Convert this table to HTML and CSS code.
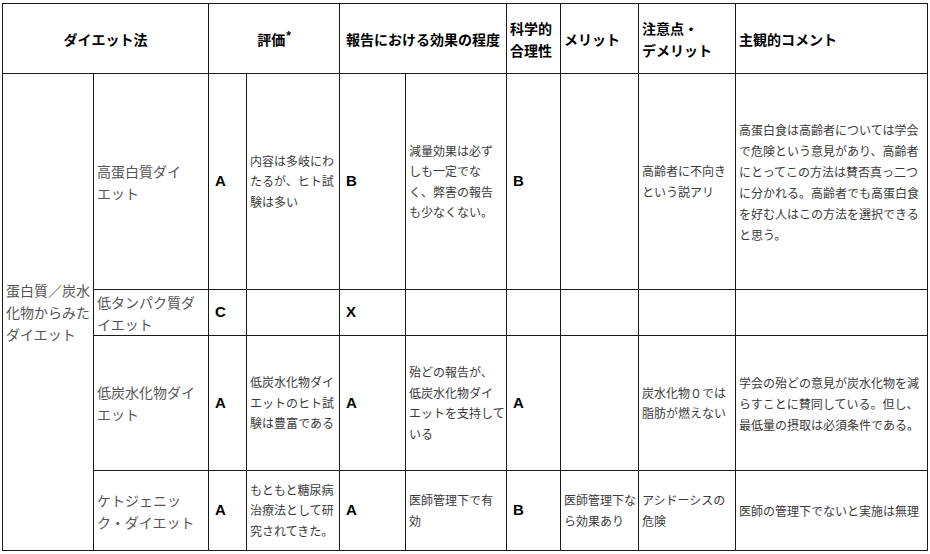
FILE: index.html
```html
<!DOCTYPE html>
<html lang="ja">
<head>
<meta charset="utf-8">
<title>ダイエット法</title>
<link rel="stylesheet" href="styles.css">
</head>
<body>
<table class="diet">
  <colgroup>
    <col class="c1"><col class="c2"><col class="c3"><col class="c4"><col class="c5">
    <col class="c6"><col class="c7"><col class="c8"><col class="c9"><col class="c10">
  </colgroup>
  <thead>
    <tr class="r-head">
      <th colspan="2" class="center">ダイエット法</th>
      <th colspan="2" class="center">評価<sup>*</sup></th>
      <th colspan="2" class="center">報告における効果の程度</th>
      <th>科学的<br>合理性</th>
      <th>メリット</th>
      <th>注意点・<br>デメリット</th>
      <th>主観的コメント</th>
    </tr>
  </thead>
  <tbody>
    <tr class="r1">
      <td rowspan="4" class="big">蛋白質／炭水<br>化物からみた<br>ダイエット</td>
      <td class="big">高蛋白質ダイ<br>エット</td>
      <td class="grade">A</td>
      <td>内容は多岐にわ<br>たるが、ヒト試<br>験は多い</td>
      <td class="grade">B</td>
      <td>減量効果は必ず<br>しも一定でな<br>く、弊害の報告<br>も少なくない。</td>
      <td class="grade">B</td>
      <td></td>
      <td>高齢者に不向き<br>という説アリ</td>
      <td class="comment">高蛋白食は高齢者については学会<br>で危険という意見があり、高齢者<br>にとってこの方法は賛否真っ二つ<br>に分かれる。高齢者でも高蛋白食<br>を好む人はこの方法を選択できる<br>と思う。</td>
    </tr>
    <tr class="r2">
      <td class="big">低タンパク質ダ<br>イエット</td>
      <td class="grade">C</td>
      <td></td>
      <td class="grade">X</td>
      <td></td>
      <td></td>
      <td></td>
      <td></td>
      <td></td>
    </tr>
    <tr class="r3">
      <td class="big">低炭水化物ダイ<br>エット</td>
      <td class="grade">A</td>
      <td>低炭水化物ダイ<br>エットのヒト試<br>験は豊富である</td>
      <td class="grade">A</td>
      <td>殆どの報告が、<br>低炭水化物ダイ<br>エットを支持して<br>いる</td>
      <td class="grade">A</td>
      <td></td>
      <td>炭水化物０では<br>脂肪が燃えない</td>
      <td class="comment">学会の殆どの意見が炭水化物を減<br>らすことに賛同している。但し、<br>最低量の摂取は必須条件である。</td>
    </tr>
    <tr class="r4">
      <td class="big">ケトジェニッ<br>ク・ダイエット</td>
      <td class="grade">A</td>
      <td>もともと糖尿病<br>治療法として研<br>究されてきた。</td>
      <td class="grade">A</td>
      <td>医師管理下で有<br>効</td>
      <td class="grade">B</td>
      <td>医師管理下な<br>ら効果あり</td>
      <td>アシドーシスの<br>危険</td>
      <td class="comment">医師の管理下でないと実施は無理</td>
    </tr>
  </tbody>
</table>
</body>
</html>
```
FILE: styles.css
```css
html, body {
  margin: 0;
  padding: 0;
  background: #ffffff;
}

body {
  padding: 3px 0 0 2px;
  font-family: "Noto Sans CJK JP", "Noto Sans", sans-serif;
  color: #3a3a3a;
}

.diet {
  border-collapse: collapse;
  table-layout: fixed;
  width: 926px;
}

.c1 { width: 91px; }
.c2 { width: 115px; }
.c3 { width: 38px; }
.c4 { width: 93px; }
.c5 { width: 66px; }
.c6 { width: 101px; }
.c7 { width: 54px; }
.c8 { width: 78px; }
.c9 { width: 97px; }
.c10 { width: 192px; }

.diet th,
.diet td {
  border: 1px solid #1a1a1a;
  padding: 0 3px;
  vertical-align: middle;
  text-align: left;
  white-space: nowrap;
  overflow: visible;
}

.diet th {
  font-size: 14px;
  line-height: 22px;
  font-weight: bold;
  color: #000;
}

.diet th.center {
  text-align: center;
}

.diet sup {
  font-family: "Liberation Sans", Arial, sans-serif;
  font-size: 12px;
  line-height: 0;
  vertical-align: 5px;
  margin-left: 1px;
}

.diet td {
  font-size: 12px;
  line-height: 20.5px;
}

.diet td.big {
  font-size: 14px;
  line-height: 22px;
  color: #555;
}

.diet td.comment {
  line-height: 21px;
}

.diet td.grade {
  font-family: "Liberation Sans", Arial, sans-serif;
  font-weight: bold;
  font-size: 15px;
  color: #000;
  padding-left: 6px;
}

.r-head { height: 70px; }
.r1 { height: 216px; }
.r2 { height: 46px; }
.r3 { height: 135px; }
.r4 { height: 80px; }
```
